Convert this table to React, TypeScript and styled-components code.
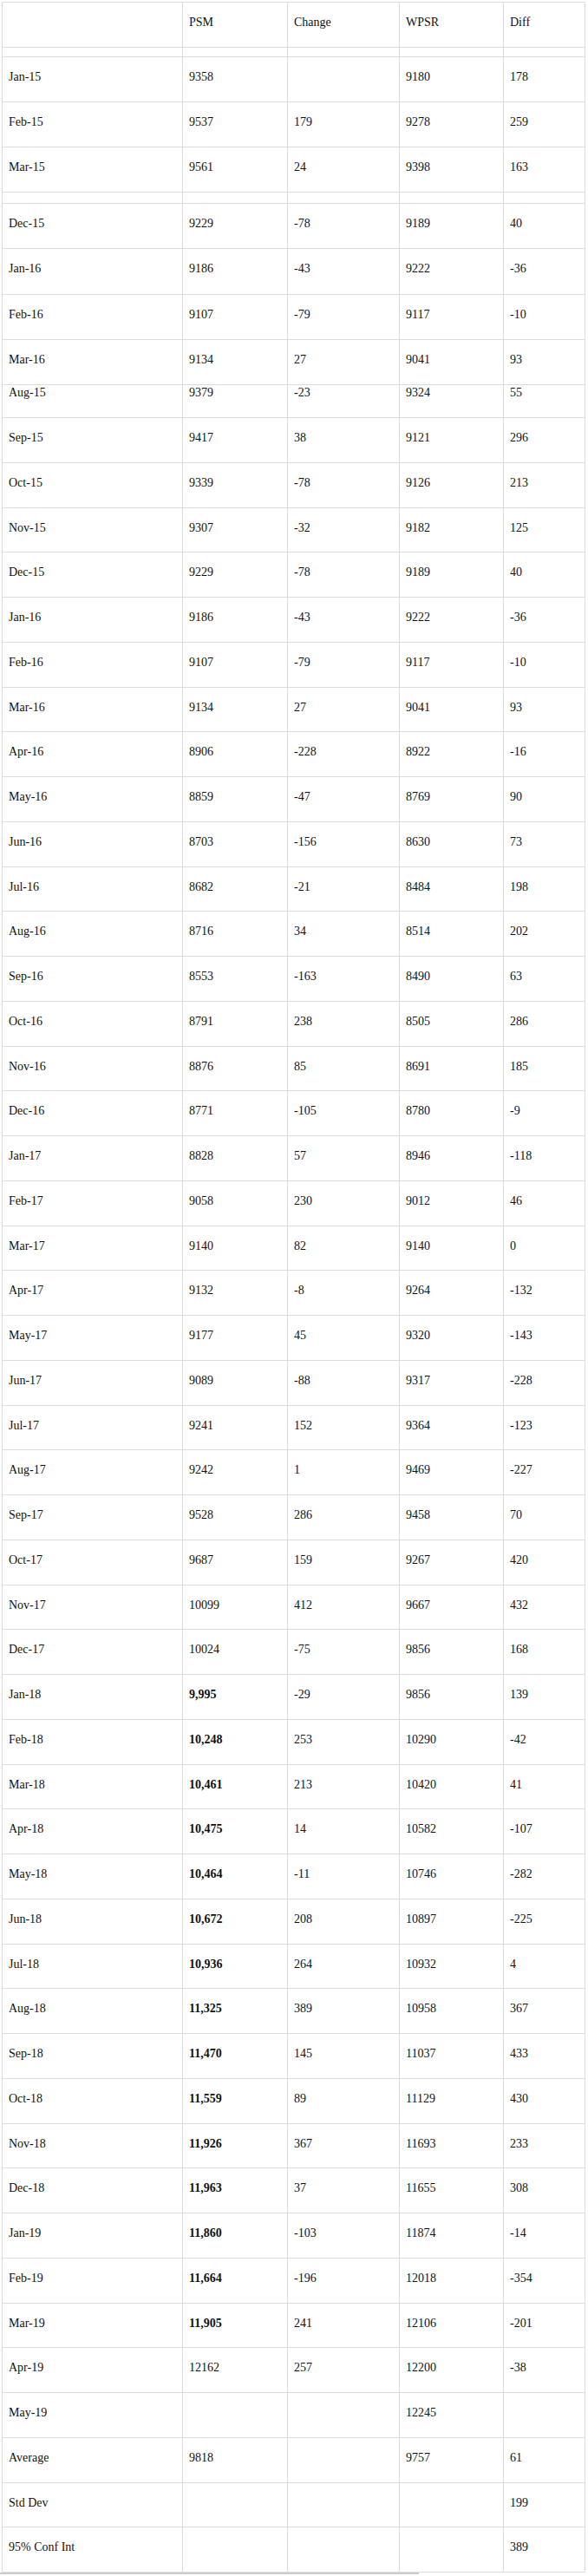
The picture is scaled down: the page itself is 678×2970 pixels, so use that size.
import React from "react";
import styled, { createGlobalStyle } from "styled-components";

const GlobalStyle = createGlobalStyle`
  html, body {
    margin: 0;
    padding: 0;
    background: #ffffff;
  }
  body {
    font-family: "Liberation Serif", "Times New Roman", serif;
    color: #111111;
  }
`;

const Page = styled.div`
  width: 678px;
  padding-top: 2px;
`;

const Table = styled.div`
  margin-left: 2px;
  width: 673px;
  box-sizing: border-box;
  border-right: 1px solid #dcdcdc;
  border-bottom: 1px solid #dcdcdc;
`;

const Row = styled.div<{ $height: number }>`
  display: grid;
  grid-template-columns: 208px 121px 129px 120px 94px;
  height: ${(p) => p.$height}px;
  box-sizing: border-box;
  border-top: 1px solid #dcdcdc;
`;

const Cell = styled.div<{ $pad: number; $bold?: boolean }>`
  border-left: 1px solid #dcdcdc;
  padding: ${(p) => p.$pad}px 0 0 7px;
  font-size: 14px;
  line-height: 16px;
  font-weight: ${(p) => (p.$bold ? 700 : 400)};
  white-space: nowrap;
  overflow: hidden;
`;

const ScrollHint = styled.div`
  width: 483px;
  height: 2px;
  background: #cccccc;
`;

type Kind = "head" | "gap1" | "gap2" | "a" | "b" | "cut" | "main";

const HEIGHTS: Record<Kind, number> = {
  head: 52,
  gap1: 11,
  gap2: 13,
  a: 52,
  b: 52.25,
  cut: 38,
  main: 51.75,
};

const PADS: Record<Kind, number> = {
  head: 15,
  gap1: 0,
  gap2: 0,
  a: 15,
  b: 15,
  cut: 1,
  main: 15,
};

type Spec = {
  kind: Kind;
  cells: string[];
  bold?: boolean;
};

const r = (kind: Kind, line: string, bold?: boolean): Spec => ({
  kind,
  cells: line.split("|"),
  bold,
});

const ROWS: Spec[] = [
  r("head", "|PSM|Change|WPSR|Diff"),
  r("gap1", "||||"),
  r("a", "Jan-15|9358||9180|178"),
  r("a", "Feb-15|9537|179|9278|259"),
  r("a", "Mar-15|9561|24|9398|163"),
  r("gap2", "||||"),
  r("b", "Dec-15|9229|-78|9189|40"),
  r("b", "Jan-16|9186|-43|9222|-36"),
  r("b", "Feb-16|9107|-79|9117|-10"),
  r("b", "Mar-16|9134|27|9041|93"),
  r("cut", "Aug-15|9379|-23|9324|55"),
  r("main", "Sep-15|9417|38|9121|296"),
  r("main", "Oct-15|9339|-78|9126|213"),
  r("main", "Nov-15|9307|-32|9182|125"),
  r("main", "Dec-15|9229|-78|9189|40"),
  r("main", "Jan-16|9186|-43|9222|-36"),
  r("main", "Feb-16|9107|-79|9117|-10"),
  r("main", "Mar-16|9134|27|9041|93"),
  r("main", "Apr-16|8906|-228|8922|-16"),
  r("main", "May-16|8859|-47|8769|90"),
  r("main", "Jun-16|8703|-156|8630|73"),
  r("main", "Jul-16|8682|-21|8484|198"),
  r("main", "Aug-16|8716|34|8514|202"),
  r("main", "Sep-16|8553|-163|8490|63"),
  r("main", "Oct-16|8791|238|8505|286"),
  r("main", "Nov-16|8876|85|8691|185"),
  r("main", "Dec-16|8771|-105|8780|-9"),
  r("main", "Jan-17|8828|57|8946|-118"),
  r("main", "Feb-17|9058|230|9012|46"),
  r("main", "Mar-17|9140|82|9140|0"),
  r("main", "Apr-17|9132|-8|9264|-132"),
  r("main", "May-17|9177|45|9320|-143"),
  r("main", "Jun-17|9089|-88|9317|-228"),
  r("main", "Jul-17|9241|152|9364|-123"),
  r("main", "Aug-17|9242|1|9469|-227"),
  r("main", "Sep-17|9528|286|9458|70"),
  r("main", "Oct-17|9687|159|9267|420"),
  r("main", "Nov-17|10099|412|9667|432"),
  r("main", "Dec-17|10024|-75|9856|168"),
  r("main", "Jan-18|9,995|-29|9856|139", true),
  r("main", "Feb-18|10,248|253|10290|-42", true),
  r("main", "Mar-18|10,461|213|10420|41", true),
  r("main", "Apr-18|10,475|14|10582|-107", true),
  r("main", "May-18|10,464|-11|10746|-282", true),
  r("main", "Jun-18|10,672|208|10897|-225", true),
  r("main", "Jul-18|10,936|264|10932|4", true),
  r("main", "Aug-18|11,325|389|10958|367", true),
  r("main", "Sep-18|11,470|145|11037|433", true),
  r("main", "Oct-18|11,559|89|11129|430", true),
  r("main", "Nov-18|11,926|367|11693|233", true),
  r("main", "Dec-18|11,963|37|11655|308", true),
  r("main", "Jan-19|11,860|-103|11874|-14", true),
  r("main", "Feb-19|11,664|-196|12018|-354", true),
  r("main", "Mar-19|11,905|241|12106|-201", true),
  r("main", "Apr-19|12162|257|12200|-38"),
  r("main", "May-19|||12245|"),
  r("main", "Average|9818||9757|61"),
  r("main", "Std Dev||||199"),
  r("main", "95% Conf Int||||389"),
];

export default function App() {
  return (
    <>
      <GlobalStyle />
      <Page>
        <Table>
          {ROWS.map((row, i) => (
            <Row key={i} $height={HEIGHTS[row.kind]}>
              {row.cells.map((c, j) => (
                <Cell key={j} $pad={PADS[row.kind]} $bold={row.bold && j === 1}>
                  {c}
                </Cell>
              ))}
            </Row>
          ))}
        </Table>
        <ScrollHint />
      </Page>
    </>
  );
}
